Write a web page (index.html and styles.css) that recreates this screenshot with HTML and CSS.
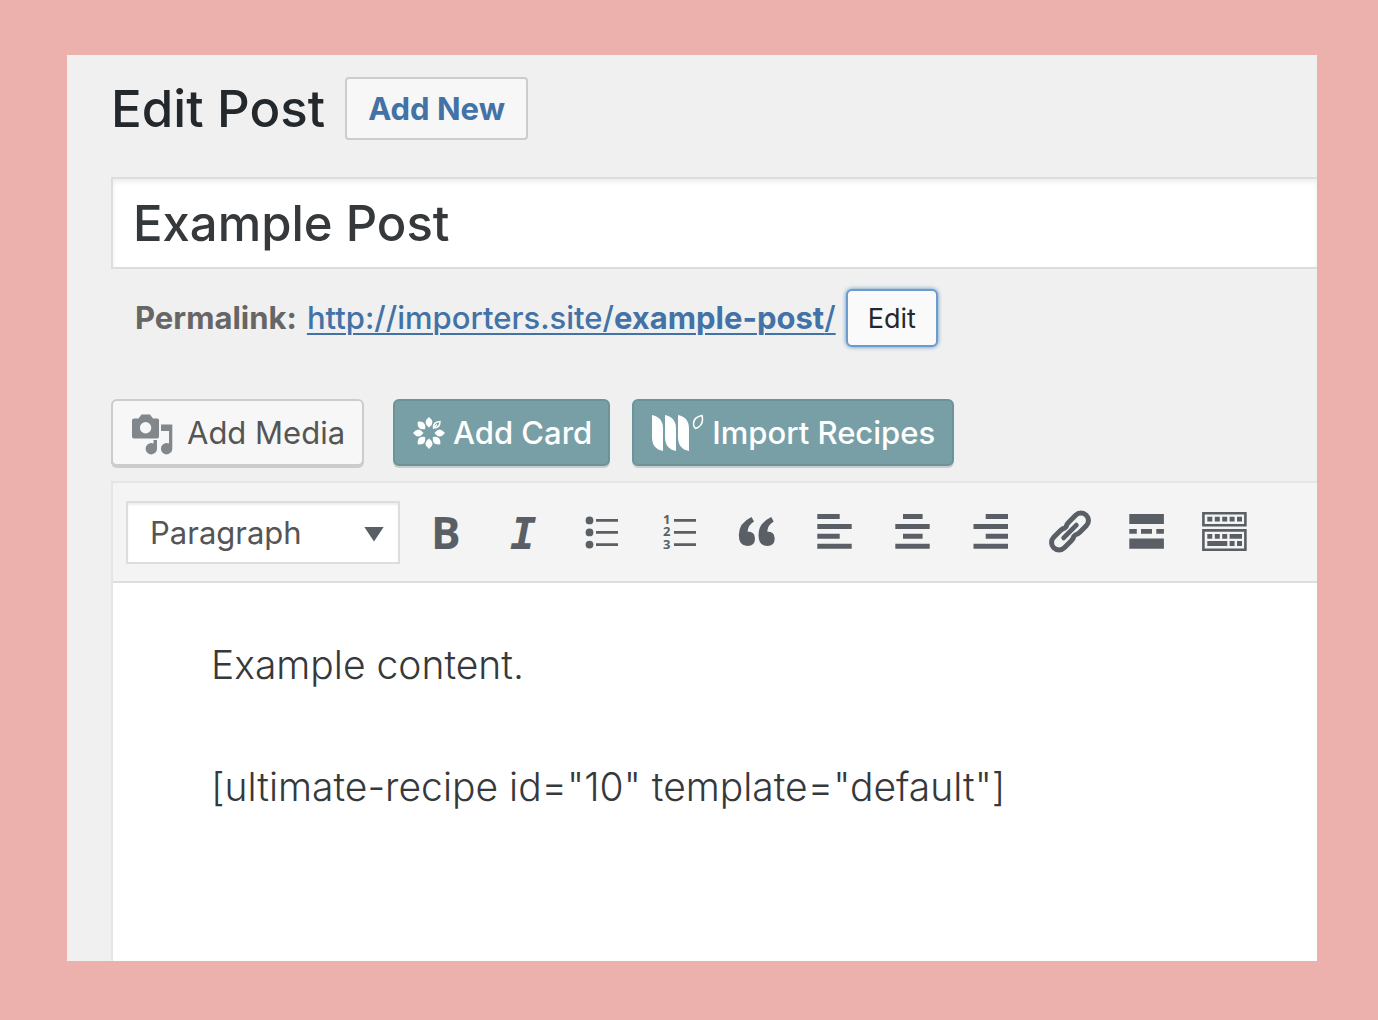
FILE: index.html
```html
<!DOCTYPE html>
<html lang="en">
<head>
<meta charset="utf-8">
<meta name="viewport" content="width=device-width, initial-scale=1">
<title>Edit Post</title>
<link rel="stylesheet" href="styles.css">
</head>
<body>
<main class="panel">
  <header class="page-header">
    <h1 class="page-title">Edit Post</h1>
    <button type="button" class="add-new">Add New</button>
  </header>

  <input class="post-title" type="text" aria-label="Post title" value="Example Post">

  <div class="permalink">
    <strong class="permalink-label">Permalink:</strong>
    <a class="permalink-link" href="#">http://importers.site/<b>example-post</b>/</a>
    <button type="button" class="edit-slug">Edit</button>
  </div>

  <div class="media-buttons">
    <button type="button" class="btn btn-media">
      <svg class="icon-media" viewBox="0 0 42 44" aria-hidden="true">
        <path fill-rule="evenodd" d="M2 7.500H6.500L9.500 3.500H18L21 7.500H25.500Q27 7.500 27 9V25.500Q27 27.500 25 27.500H2Q0 27.500 0 25.500V9.500Q0 7.500 2 7.500ZM13.600 11A5.700 5.700 0 1 0 13.600 22.400A5.700 5.700 0 1 0 13.600 11Z"/>
        <path d="M29 13.500H40.300V37.500A5.700 5.700 0 1 1 34.600 32Q36 32 37 32.400V20H29ZM21.500 29H25V37.500A5.700 5.700 0 1 1 19.300 32Q20.500 32 21.500 32.400Z"/>
      </svg>
      Add Media
    </button>
    <button type="button" class="btn btn-teal btn-card">
      <svg class="icon-card" viewBox="-16 -16 32 32" aria-hidden="true">
        <defs><path id="petal" d="M0-16Q7-10.500 0-5.500Q-7-10.500 0-16Z"/></defs>
        <use href="#petal"/>
        <use href="#petal" transform="rotate(90)"/>
        <use href="#petal" transform="rotate(135)"/>
        <use href="#petal" transform="rotate(180)"/>
        <use href="#petal" transform="rotate(225)"/>
        <use href="#petal" transform="rotate(270)"/>
        <use href="#petal" transform="rotate(315)"/>
        <path class="outline" d="M11-11.500Q4-11 4.500-5Q11-5 11-11.500ZM4.500-5L8-8.500"/>
      </svg>
      Add Card
    </button>
    <button type="button" class="btn btn-teal btn-import">
      <svg class="icon-import" viewBox="0 0 52 38" aria-hidden="true">
        <path d="M0 1Q11 3 11 15V37Q0 35 0 23ZM13 1Q24 3 24 15V37Q13 35 13 23ZM26 1Q37 3 37 15V37Q26 35 26 23Z"/>
        <path class="outline" d="M50 1.500Q41.500 3 41.500 10Q41.500 13 43.500 14.500Q50.500 12 50.500 5.500Q50.500 3 50 1.500Z"/>
      </svg>
      Import Recipes
    </button>
  </div>

  <section class="editor">
    <div class="toolbar" role="toolbar" aria-label="Formatting">
      <div class="format">
        <select class="format-select" aria-label="Block format"><option>Paragraph</option></select>
      </div>
      <button type="button" class="tool" aria-label="Bold">
        <svg viewBox="0 0 48 48"><text class="bold-mark" x="11" y="41">B</text></svg>
      </button>
      <button type="button" class="tool" aria-label="Italic">
        <svg viewBox="0 0 48 48"><text class="italic-mark" x="12" y="41">I</text></svg>
      </button>
      <button type="button" class="tool" aria-label="Bulleted list">
        <svg viewBox="0 0 48 48"><circle cx="13.500" cy="12.400" r="3.900"/><circle cx="13.500" cy="24.400" r="3.900"/><circle cx="13.500" cy="36.600" r="3.900"/><path d="M20 11h22v2.700h-22zM20 23h22v2.700h-22zM20 35.300h22V38h-22z"/></svg>
      </button>
      <button type="button" class="tool" aria-label="Numbered list">
        <svg viewBox="0 0 48 48"><text class="number-mark" x="9" y="16">1</text><text class="number-mark" x="9" y="28">2</text><text class="number-mark" x="9" y="41">3</text><path d="M20 11h22v2.700h-22zM20 23h22v2.700h-22zM20 35.300h22V38h-22z"/></svg>
      </button>
      <button type="button" class="tool" aria-label="Blockquote">
        <svg viewBox="0 0 48 48"><path id="quote" d="M19.500 9L22 13.500Q16 17 15.500 23.500Q23 23.500 23 30.500Q23 38 15.500 38Q6.800 38 6.800 27Q6.800 15 19.500 9Z"/><use href="#quote" x="19.700"/></svg>
      </button>
      <button type="button" class="tool" aria-label="Align left">
        <svg viewBox="0 0 48 48"><path d="M7.300 6h22.400v5H7.300zM7.300 16h34.400v5H7.300zM7.300 25.700h22.400v5H7.300zM7.300 35.700h34.400v5H7.300z"/></svg>
      </button>
      <button type="button" class="tool" aria-label="Align center">
        <svg viewBox="0 0 48 48"><path d="M15 6h19.600v5H15zM7.300 16h34.400v5H7.300zM15 25.700h19.600v5H15zM7.300 35.700h34.400v5H7.300z"/></svg>
      </button>
      <button type="button" class="tool" aria-label="Align right">
        <svg viewBox="0 0 48 48"><path d="M19.700 6h22.300v5H19.700zM7.500 16H42v5H7.500zM19.700 25.700h22.300v5H19.700zM7.500 35.700H42v5H7.500z"/></svg>
      </button>
      <button type="button" class="tool" aria-label="Insert link">
        <svg viewBox="0 0 48 48">
          <g transform="translate(26 23.500) rotate(-45)" fill="none" stroke="#595f64" stroke-width="5">
            <path d="M-1.500-6.200Q-3-7.500-6-7.500H-15.500A7.500 7.500 0 0 0-15.500 7.500H-6Q0 7.500 1 3.500"/>
            <path d="M1.500 6.200Q3 7.500 6 7.500H15.500A7.500 7.500 0 0 0 15.500-7.500H6Q0-7.500-1-3.500"/>
            <path d="M-9 0H9" stroke="#f4f4f4" stroke-width="7.500" stroke-linecap="round"/>
            <path d="M-9 0H9" stroke-width="4.800" stroke-linecap="round"/>
          </g>
        </svg>
      </button>
      <button type="button" class="tool" aria-label="Insert Read More tag">
        <svg viewBox="0 0 48 48"><path d="M7.300 6h34.600v10H7.300zM7.300 21h7.500v4.700H7.300zM19 21h11v4.700H19zM34.300 21h7.600v4.700h-7.600zM7.300 30.500h34.600v10.200H7.300z"/></svg>
      </button>
      <button type="button" class="tool" aria-label="Toolbar toggle">
        <svg viewBox="0 0 48 48">
          <path fill="none" stroke="#595f64" stroke-width="2.600" d="M3.400 5.200h42v12H3.400zM3.400 22.400h42v19.400h-42z"/>
          <path d="M7.300 8.700h5v4.800h-5zM14.800 8.700h5v4.800h-5zM22.200 8.700h5v4.800h-5zM29.600 8.700h5v4.800h-5zM37 8.700h5v4.800h-5zM7.300 26h5v4.800h-5zM14.800 26h5v4.800h-5zM22.200 26h5v4.800h-5zM29.600 26H42v4.800H29.600zM7.300 33h20v5h-20zM29.600 33h5v5h-5zM37 33h5v5h-5z"/>
        </svg>
      </button>
    </div>
    <div class="content">
      <p>Example content.</p>
      <p>[ultimate-recipe id="10" template="default"]</p>
    </div>
  </section>
</main>
</body>
</html>
```
FILE: styles.css
```css
* { box-sizing: border-box; }

body {
  margin: 0;
  min-height: 100vh;
  padding: 55px 61px 59px 67px;
  display: flex;
  background: #ecb1ac;
  font-family: Inter, "Liberation Sans", sans-serif;
  color: #36393b;
}

button, input, select { font-family: inherit; margin: 0; }

.panel {
  flex: 1;
  min-width: 0;
  display: flex;
  flex-direction: column;
  padding: 22px 0 0 44px;
  background: #f0f0f0;
  overflow: hidden;
}

.page-header {
  display: flex;
  align-items: center;
  gap: 20px;
  margin-bottom: 37px;
}

.page-title {
  margin: 0;
  font-size: 51px;
  line-height: 62px;
  font-weight: 450;
  color: #23282d;
}

.add-new {
  height: 63px;
  padding: 0 21px;
  border: 2px solid #ccc;
  border-radius: 4px;
  background: #f7f7f7;
  color: #4272a6;
  font-size: 31px;
  font-weight: 700;
}

.post-title {
  width: 100%;
  height: 92px;
  padding: 0 20px;
  border: 2px solid #ddd;
  border-right: 0;
  border-radius: 0;
  background: #fff;
  box-shadow: inset 0 3px 5px rgba(0, 0, 0, 0.07);
  color: #36393b;
  font-size: 49px;
  font-weight: 450;
}

.permalink {
  display: flex;
  align-items: center;
  gap: 10px;
  margin: 20px 0 52px;
  padding-left: 24px;
  font-size: 31px;
  line-height: 36px;
}

.permalink-label { font-weight: 700; color: #666; }

.permalink-link {
  color: #4272a6;
  font-weight: 450;
  text-decoration-thickness: 2px;
  text-underline-offset: 4px;
}

.permalink-link b { font-weight: 700; }

.edit-slug {
  height: 58px;
  padding: 0 20px;
  border: 2px solid #6c9bd0;
  border-radius: 6px;
  background: #fafafa;
  box-shadow: 0 0 4px #5b8fb9;
  color: #23282d;
  font-size: 27px;
}

.media-buttons {
  display: flex;
  align-items: flex-start;
  margin-bottom: 15px;
}

.btn {
  display: flex;
  align-items: center;
  height: 67px;
  border: 2px solid #ccc;
  border-radius: 6px;
  background: #f7f7f7;
  box-shadow: 0 2px 0 #ccc;
  color: #555;
  font-size: 31px;
}

.btn svg { display: block; fill: currentColor; }

.btn-media { padding: 0 17px 0 19px; gap: 13px; margin-right: 29px; }
.btn-media svg { fill: #82878c; }

.btn-teal {
  border-color: #6b9499;
  background: #789fa6;
  color: #fff;
  font-weight: 500;
}

.btn-card { padding: 0 16px 0 18px; gap: 8px; margin-right: 22px; }
.btn-import { padding: 0 17px 0 18px; gap: 8px; }

.outline { fill: none; stroke: currentColor; stroke-width: 1.500; }

.icon-media { width: 42px; height: 44px; }
.icon-card { width: 32px; height: 32px; }
.icon-import { width: 52px; height: 38px; }

.editor {
  flex: 1;
  display: flex;
  flex-direction: column;
  border: 2px solid #e5e5e5;
  border-width: 2px 0 0 2px;
  background: #fff;
}

.toolbar {
  display: flex;
  align-items: center;
  height: 100px;
  padding-left: 13px;
  border-bottom: 2px solid #ddd;
  background: #f4f4f4;
}

.format { position: relative; flex: none; width: 274px; margin-right: 5px; }

.format::after {
  content: "";
  position: absolute;
  right: 16px;
  top: 26px;
  width: 20px;
  height: 15px;
  background: #595f64;
  clip-path: polygon(0 0, 100% 0, 50% 100%);
  pointer-events: none;
}

.format-select {
  display: block;
  width: 100%;
  height: 63px;
  padding: 0 22px;
  appearance: none;
  border: 2px solid #ddd;
  border-radius: 0;
  background: #fff;
  box-shadow: inset 0 2px 2px rgba(0, 0, 0, 0.07);
  color: #555;
  font-size: 31px;
}

.tool {
  flex: none;
  width: 78px;
  height: 64px;
  padding: 0 15px;
  border: 0;
  background: none;
}

.tool svg { display: block; width: 48px; height: 48px; overflow: visible; fill: #595f64; }

.bold-mark { font: 700 44px "Open Sans", sans-serif; }
.italic-mark { font: italic 700 44px "DejaVu Sans Mono", monospace; }
.number-mark { font: 700 13px "Open Sans", sans-serif; }

.content {
  padding: 51px 98px;
  font-size: 39px;
  line-height: 61px;
  font-weight: 350;
}

.content p { margin: 0 0 61px; }
.content p:last-child { margin-bottom: 0; }
```
